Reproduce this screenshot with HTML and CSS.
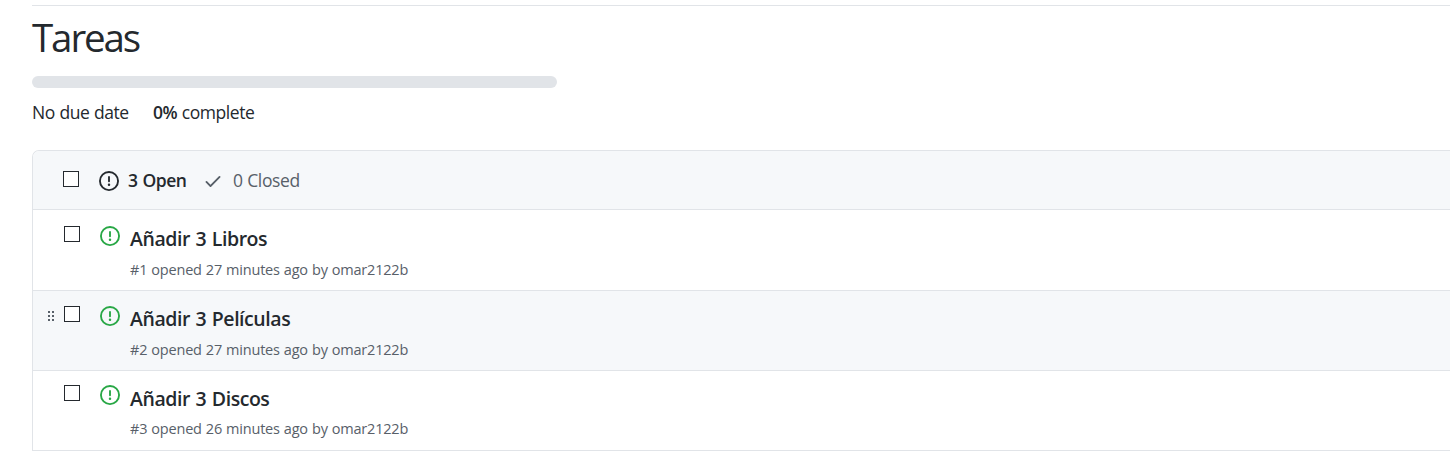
FILE: index.html
```html
<!DOCTYPE html>
<html lang="es">
<head>
<meta charset="utf-8">
<title>Tareas</title>
<link rel="stylesheet" href="styles.css">
</head>
<body>
<svg class="defs" aria-hidden="true">
  <symbol id="issue" viewBox="0 0 16 16"><path fill="currentColor" fill-rule="evenodd" d="M8 1.5a6.5 6.5 0 100 13 6.5 6.5 0 000-13zM0 8a8 8 0 1116 0A8 8 0 010 8zm9 3a1 1 0 11-2 0 1 1 0 012 0zm-.25-6.25a.75.75 0 00-1.5 0v3.5a.75.75 0 001.5 0v-3.5z"/></symbol>
</svg>
<main class="page">
  <header class="milestone">
    <h1 class="milestone-title">Tareas</h1>
    <div class="progress"></div>
    <div class="stats"><span class="due">No due date</span><span class="percent"><b>0%</b> complete</span></div>
  </header>
  <section class="box">
    <div class="box-header">
      <span class="check"></span>
      <svg class="icon"><use href="#issue"/></svg>
      <span class="open">3 Open</span>
      <svg class="icon tick" viewBox="0 0 16 16"><path fill="currentColor" fill-rule="evenodd" d="M13.78 4.22a.75.75 0 010 1.06l-7.25 7.25a.75.75 0 01-1.06 0L2.22 9.28a.75.75 0 011.06-1.06L6 10.94l6.72-6.72a.75.75 0 011.06 0z"/></svg>
      <span class="closed">0 Closed</span>
    </div>
    <article class="row">
      <span class="handle"></span><span class="check"></span>
      <svg class="icon green"><use href="#issue"/></svg>
      <div class="text"><h2 class="title">Añadir 3 Libros</h2><p class="meta">#1 opened 27 minutes ago by omar2122b</p></div>
    </article>
    <article class="row active">
      <span class="handle"><svg class="grip" viewBox="0 0 7 10"><path d="M0 0h2v2H0zM4 0h2v2H4zM0 4h2v2H0zM4 4h2v2H4zM0 8h2v2H0zM4 8h2v2H4z"/></svg></span><span class="check"></span>
      <svg class="icon green"><use href="#issue"/></svg>
      <div class="text"><h2 class="title">Añadir 3 Películas</h2><p class="meta">#2 opened 27 minutes ago by omar2122b</p></div>
    </article>
    <article class="row last">
      <span class="handle"></span><span class="check"></span>
      <svg class="icon green"><use href="#issue"/></svg>
      <div class="text"><h2 class="title">Añadir 3 Discos</h2><p class="meta">#3 opened 26 minutes ago by omar2122b</p></div>
    </article>
  </section>
</main>
</body>
</html>
```
FILE: styles.css
```css
* { box-sizing: border-box; }
body { margin: 0; background: #fff; color: #24292e; font-family: "Open Sans", "Noto Sans", sans-serif; font-size: 17.5px; overflow: hidden; }
h1, h2, p { margin: 0; }
.defs { position: absolute; width: 0; height: 0; }
.page { padding: 5px 0 0 32px; }
.milestone { border-top: 1px solid #e1e4e8; height: 145px; }
.milestone-title { font-size: 38.5px; font-weight: 400; line-height: 50px; padding-top: 6px; height: 70px; letter-spacing: -2.1px; white-space: nowrap; }
.progress { width: 525px; height: 12px; border-radius: 6px; background: #e1e4e8; }
.stats { display: flex; line-height: 26px; padding-top: 11px; white-space: nowrap; letter-spacing: -0.45px; word-spacing: 0.5px; }
.due { width: 121px; }
.stats b { font-weight: 600; }
.box { border: 1px solid #e1e4e8; border-right: 0; border-radius: 7px 0 0 0; overflow: hidden; }
.box-header { display: flex; height: 59px; padding: 20px 0 0 30px; background: #f6f8fa; border-bottom: 1px solid #e1e4e8; line-height: 18px; white-space: nowrap; }
.check { flex: none; width: 16px; height: 16px; border: 1px solid #24292e; background: #fff; }
.icon { flex: none; width: 20px; height: 20px; margin-left: 20px; }
.green { color: #28a745; }
.open { width: 84px; padding-left: 9px; font-weight: 600; letter-spacing: -0.5px; word-spacing: 1px; }
.tick { margin-left: 0; color: #586069; }
.closed { padding-left: 10px; color: #586069; letter-spacing: -0.4px; word-spacing: 0.5px; }
.row { display: flex; height: 81px; padding-top: 16px; border-bottom: 1px solid #e1e4e8; }
.handle { flex: none; width: 31px; padding: 5px 0 0 15px; }
.grip { display: block; width: 7px; height: 10px; fill: #586069; }
.active { height: 80px; padding-top: 15px; background: #f6f8fa; }
.last { height: 79px; padding-top: 14px; border-bottom: 0; }
.text { padding-left: 10px; white-space: nowrap; }
.title { font-size: 19.5px; font-weight: 600; line-height: 26px; letter-spacing: -0.45px; word-spacing: 1px; }
.last .title { line-height: 28px; }
.meta { font-size: 14.5px; line-height: 24px; padding-top: 6px; color: #586069; letter-spacing: -0.2px; word-spacing: 0.5px; }
.last .meta { padding-top: 4px; }
```
